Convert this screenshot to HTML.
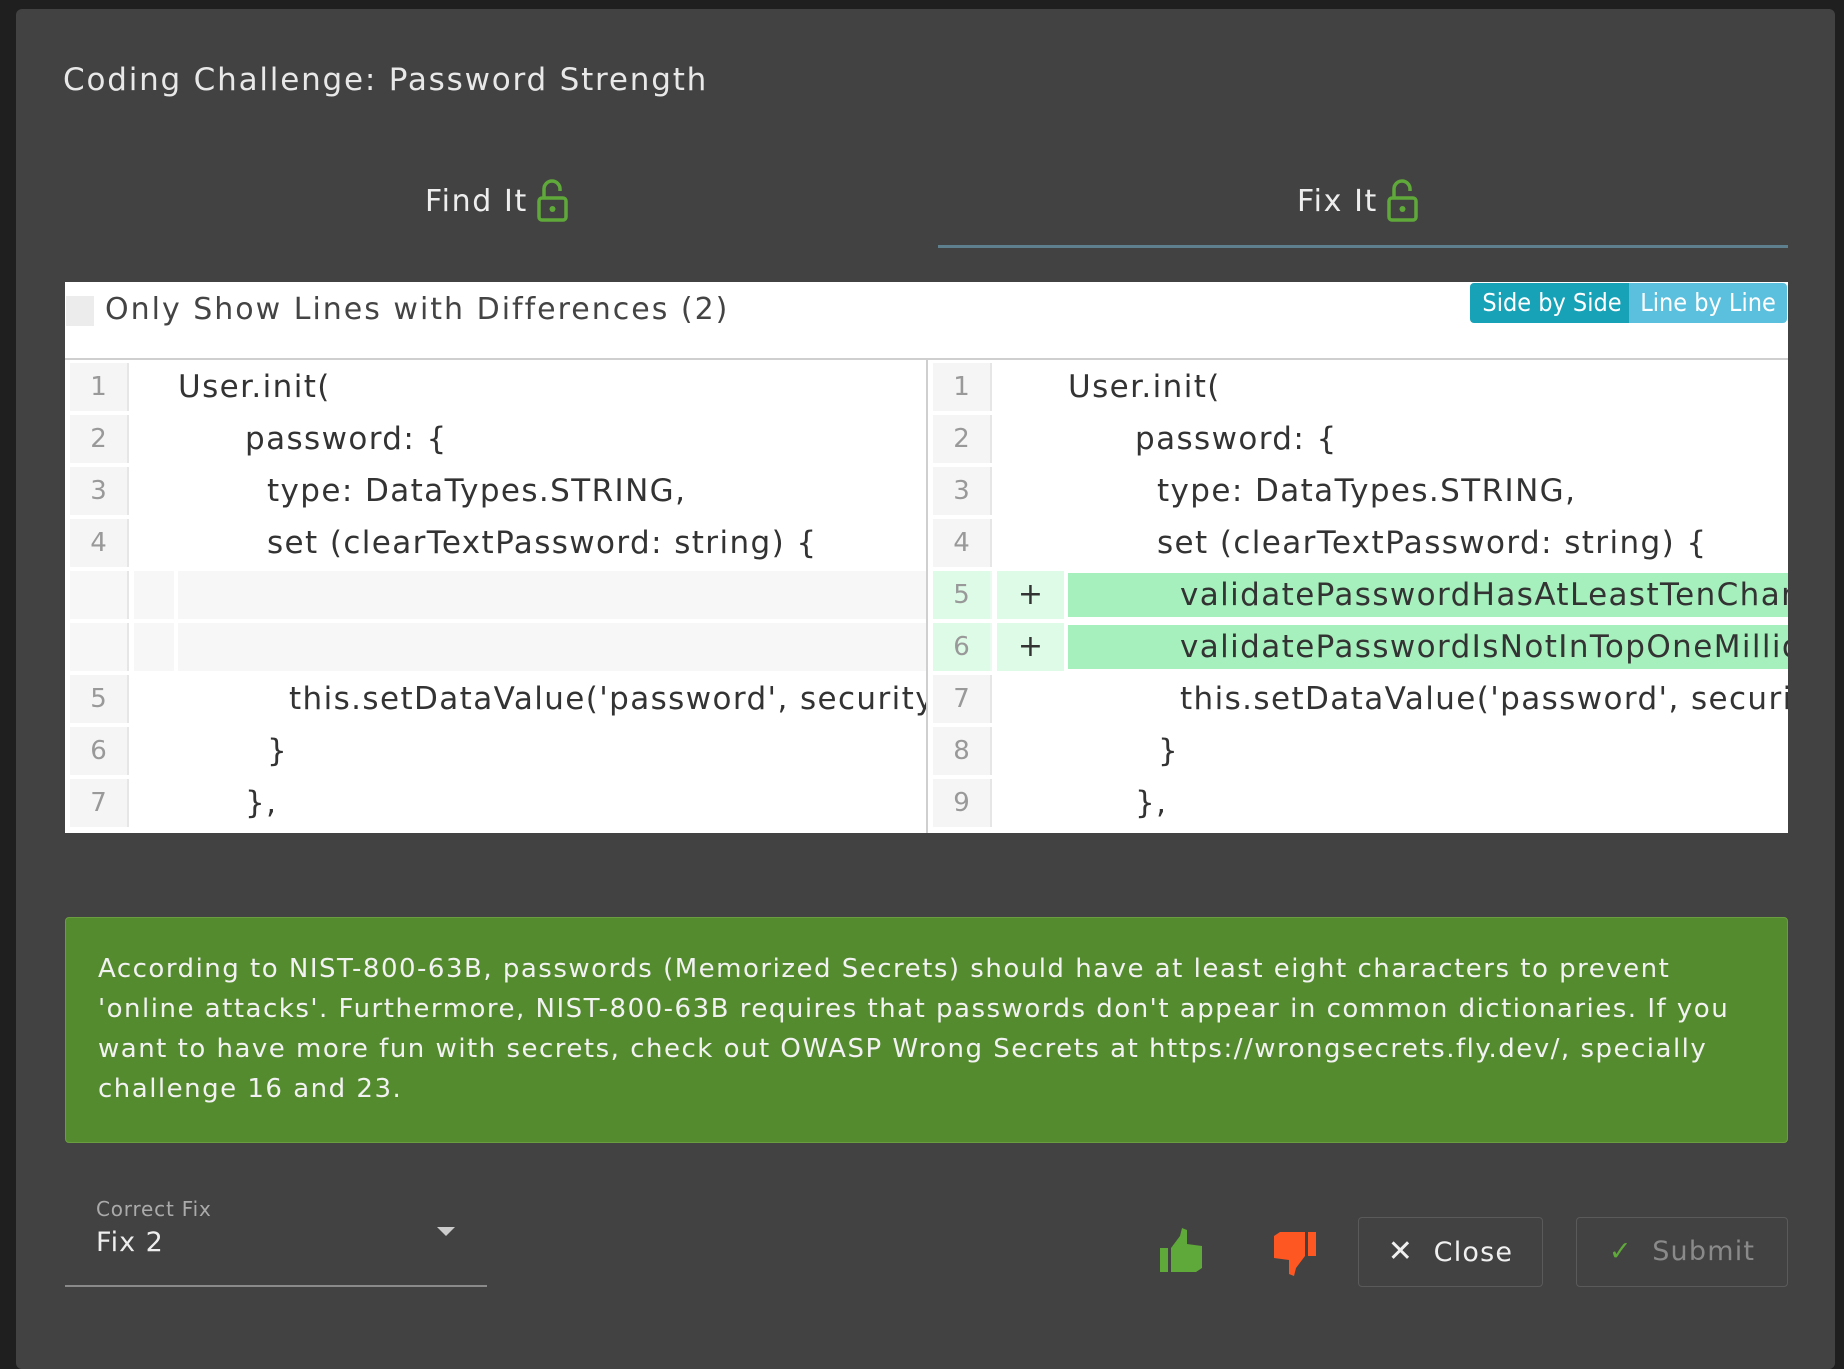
<!DOCTYPE html>
<html><head><meta charset="utf-8"><style>
*{margin:0;padding:0;box-sizing:border-box}
body{width:1844px;height:1358px;background:#1f1f1f;position:relative;overflow:hidden;font-family:"DejaVu Sans","Liberation Sans",sans-serif}
.modal{position:absolute;left:16px;top:9px;width:1819px;height:1360px;background:#424242;border-radius:6px}
.a{position:absolute;white-space:nowrap}
.title{left:63px;top:62px;font-size:31px;color:#e8e8e8;letter-spacing:1.8px}
.tab{top:184px;font-size:30px;color:#eee;letter-spacing:1.6px}
.panel{position:absolute;left:65px;top:282px;width:1723px;height:551px;background:#fff;overflow:hidden}
.ln{position:absolute;width:59px;height:48px;background:#f5f5f5;border-right:2px solid #e6e6e6;color:#999;font-size:26px;text-align:center;line-height:48px}
.code{position:absolute;height:48px;line-height:48px;font-size:31px;color:#333;white-space:nowrap;letter-spacing:1.4px}
.msg{position:absolute;left:65px;top:917px;width:1723px;height:226px;background:#558b2f;border:1px solid #6a9d3f;border-radius:4px;color:#f2f2f2;font-size:26px;letter-spacing:1.5px}
.msg div{position:absolute;left:32px;white-space:nowrap}
.btn{position:absolute;top:1217px;height:70px;border:1px solid #5a5a5a;border-radius:4px;font-size:27px;line-height:68px;text-align:center;letter-spacing:1.2px}
</style></head><body>
<div class="modal"></div>
<div class="a title">Coding Challenge: Password Strength</div>
<div class="a tab" style="left:425px">Find It</div>
<svg class="a" style="left:536px;top:178px" width="34" height="44" viewBox="0 0 34 44"><path d="M8 20V11a8 8 0 0 1 16 0v2" fill="none" stroke="#5fa83a" stroke-width="3.5"/><rect x="3" y="20" width="27" height="22" rx="3" fill="none" stroke="#5fa83a" stroke-width="3.5"/><circle cx="16.5" cy="31" r="3" fill="#5fa83a"/></svg>
<div class="a tab" style="left:1297px">Fix It</div>
<svg class="a" style="left:1386px;top:178px" width="34" height="44" viewBox="0 0 34 44"><path d="M8 20V11a8 8 0 0 1 16 0v2" fill="none" stroke="#5fa83a" stroke-width="3.5"/><rect x="3" y="20" width="27" height="22" rx="3" fill="none" stroke="#5fa83a" stroke-width="3.5"/><circle cx="16.5" cy="31" r="3" fill="#5fa83a"/></svg>
<div class="a" style="left:938px;top:245px;width:850px;height:3px;background:#5d7f8e"></div>

<div class="panel">
 <div class="a" style="left:1px;top:14px;width:28px;height:30px;background:#ececec"></div>
 <div class="a" style="left:40px;top:8px;font-size:30px;color:#444;letter-spacing:2px;line-height:40px">Only Show Lines with Differences (2)</div>
 <div class="a" style="left:1405px;top:1px;width:164px;height:40px;background:#17a2b8;border-radius:4px 0 0 4px;color:#fff;font-size:25px;line-height:40px;text-align:center;font-family:'DejaVu Sans Condensed','DejaVu Sans',sans-serif">Side by Side</div>
 <div class="a" style="left:1564px;top:1px;width:158px;height:40px;background:#5bc0de;border-radius:0 4px 4px 0;color:#fff;font-size:25px;line-height:40px;text-align:center;font-family:'DejaVu Sans Condensed','DejaVu Sans',sans-serif">Line by Line</div>
 <div class="a" style="left:0;top:76px;width:1723px;height:2px;background:#cfcfcf"></div>
 <div class="a" style="left:861px;top:77px;width:2px;height:474px;background:#cfcfcf"></div>

 <div class="ln" style="left:5px;top:81px">1</div><div class="code" style="left:113px;top:81px">User.init(</div>
 <div class="ln" style="left:5px;top:133px">2</div><div class="code" style="left:180px;top:133px">password: {</div>
 <div class="ln" style="left:5px;top:185px">3</div><div class="code" style="left:202px;top:185px">type: DataTypes.STRING,</div>
 <div class="ln" style="left:5px;top:237px">4</div><div class="code" style="left:202px;top:237px">set (clearTextPassword: string) {</div>
 <div class="ln" style="left:5px;top:289px;background:#f7f7f7"></div><div class="a" style="left:69px;top:289px;width:40px;height:48px;background:#f7f7f7"></div><div class="a" style="left:113px;top:289px;width:748px;height:48px;background:#f7f7f7"></div>
 <div class="ln" style="left:5px;top:341px;background:#f7f7f7"></div><div class="a" style="left:69px;top:341px;width:40px;height:48px;background:#f7f7f7"></div><div class="a" style="left:113px;top:341px;width:748px;height:48px;background:#f7f7f7"></div>
 <div class="ln" style="left:5px;top:393px">5</div><div class="code" style="left:224px;top:393px;width:637px;overflow:hidden">this.setDataValue('password', security.hash(clearTextPassword))</div>
 <div class="ln" style="left:5px;top:445px">6</div><div class="code" style="left:202px;top:445px">}</div>
 <div class="ln" style="left:5px;top:497px">7</div><div class="code" style="left:180px;top:497px">},</div>

 <div class="ln" style="left:868px;top:81px">1</div><div class="code" style="left:1003px;top:81px">User.init(</div>
 <div class="ln" style="left:868px;top:133px">2</div><div class="code" style="left:1070px;top:133px">password: {</div>
 <div class="ln" style="left:868px;top:185px">3</div><div class="code" style="left:1092px;top:185px">type: DataTypes.STRING,</div>
 <div class="ln" style="left:868px;top:237px">4</div><div class="code" style="left:1092px;top:237px">set (clearTextPassword: string) {</div>
 <div class="ln" style="left:868px;top:289px;background:#ddfbe6;border-color:#e9fbee">5</div><div class="a" style="left:932px;top:289px;width:67px;height:48px;background:#ddfbe6;font-size:30px;line-height:48px;text-align:center;color:#333">+</div><div class="code" style="left:1003px;top:291px;width:720px;height:44px;line-height:44px;background:#a6f0bd;padding-left:112px;overflow:hidden">validatePasswordHasAtLeastTenChar(clearTextPassword)</div>
 <div class="ln" style="left:868px;top:341px;background:#ddfbe6;border-color:#e9fbee">6</div><div class="a" style="left:932px;top:341px;width:67px;height:48px;background:#ddfbe6;font-size:30px;line-height:48px;text-align:center;color:#333">+</div><div class="code" style="left:1003px;top:343px;width:720px;height:44px;line-height:44px;background:#a6f0bd;padding-left:112px;overflow:hidden">validatePasswordIsNotInTopOneMillion(clearTextPassword)</div>
 <div class="ln" style="left:868px;top:393px">7</div><div class="code" style="left:1115px;top:393px;width:608px;overflow:hidden">this.setDataValue('password', security.hash(clearTextPassword))</div>
 <div class="ln" style="left:868px;top:445px">8</div><div class="code" style="left:1093px;top:445px">}</div>
 <div class="ln" style="left:868px;top:497px">9</div><div class="code" style="left:1070px;top:497px">},</div>
</div>

<div class="msg">
 <div style="top:36px">According to NIST-800-63B, passwords (Memorized Secrets) should have at least eight characters to prevent</div>
 <div style="top:76px">'online attacks'. Furthermore, NIST-800-63B requires that passwords don't appear in common dictionaries. If you</div>
 <div style="top:116px">want to have more fun with secrets, check out OWASP Wrong Secrets at https://wrongsecrets.fly.dev/, specially</div>
 <div style="top:156px">challenge 16 and 23.</div>
</div>

<div class="a" style="left:96px;top:1197px;font-size:20px;color:#aaa;letter-spacing:0.8px">Correct Fix</div>
<div class="a" style="left:96px;top:1227px;font-size:27px;color:#eee;letter-spacing:1px">Fix 2</div>
<div class="a" style="left:437px;top:1227px;width:0;height:0;border-left:9px solid transparent;border-right:9px solid transparent;border-top:9px solid #ccc"></div>
<div class="a" style="left:65px;top:1285px;width:422px;height:2px;background:#8a8a8a"></div>

<svg class="a" style="left:1158px;top:1228px" width="48" height="46" viewBox="0 0 48 46"><rect x="2" y="20" width="8" height="24" fill="#5fa83a"/><path d="M13 20 L22 8 L24 0 L29 2 L29 16 L44 18 L44 40 L38 44 L13 44 Z" fill="#5fa83a"/></svg>
<svg class="a" style="left:1270px;top:1230px" width="48" height="46" viewBox="0 0 48 46"><rect x="38" y="2" width="8" height="24" fill="#ff5722"/><path d="M35 26 L26 38 L24 46 L19 44 L19 30 L4 28 L4 6 L10 2 L35 2 Z" fill="#ff5722"/></svg>
<div class="btn" style="left:1358px;width:185px;color:#f0f0f0"><span style="font-size:30px">✕</span>&nbsp;&nbsp;Close</div>
<div class="btn" style="left:1576px;width:212px;color:#8a8a8a"><span style="color:#5fa83a">✓</span>&nbsp;&nbsp;Submit</div>
</body></html>
